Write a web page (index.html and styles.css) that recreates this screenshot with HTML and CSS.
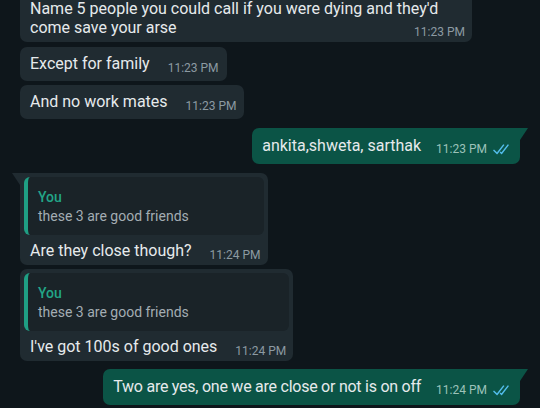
FILE: index.html
```html
<!DOCTYPE html>
<html>
<head>
<meta charset="utf-8">
<link rel="stylesheet" href="styles.css">
</head>
<body>
<div class="chat">
  <div class="row in">
    <div class="bubble multi">
      <div class="text">Name 5 people you could call if you were dying and they'd come save your arse<span class="meta">11:23 PM</span></div>
    </div>
  </div>
  <div class="row in g4">
    <div class="bubble line">
      <div class="text">Except for family</div>
      <div class="meta">11:23 PM</div>
    </div>
  </div>
  <div class="row in g4">
    <div class="bubble line">
      <div class="text">And no work mates</div>
      <div class="meta">11:23 PM</div>
    </div>
  </div>
  <div class="row out g9">
    <div class="bubble line tail">
      <div class="text">ankita,shweta, sarthak</div>
      <div class="meta">11:23 PM <svg class="check" viewBox="0 2.6 16 10" width="18" height="11"><path fill="#53bdeb" d="M15.01 3.316l-.478-.372a.365.365 0 0 0-.51.063L8.666 9.879a.32.32 0 0 1-.484.033l-.358-.325a.319.319 0 0 0-.484.032l-.378.483a.418.418 0 0 0 .036.541l1.32 1.266c.143.14.361.125.484-.033l6.272-8.048a.366.366 0 0 0-.064-.512zm-4.1 0l-.478-.372a.365.365 0 0 0-.51.063L4.566 9.879a.32.32 0 0 1-.484.033L1.891 7.769a.366.366 0 0 0-.515.006l-.423.433a.364.364 0 0 0 .006.514l3.258 3.185c.143.14.361.125.484-.033l6.272-8.048a.365.365 0 0 0-.063-.51z"/></svg></div>
    </div>
  </div>
  <div class="row in g9">
    <div class="bubble quoted tail">
      <div class="quote">
        <div class="qname">You</div>
        <div class="qtext">these 3 are good friends</div>
      </div>
      <div class="qrow">
        <div class="text">Are they close though?</div>
        <div class="meta">11:24 PM</div>
      </div>
    </div>
  </div>
  <div class="row in g4">
    <div class="bubble quoted">
      <div class="quote">
        <div class="qname">You</div>
        <div class="qtext">these 3 are good friends</div>
      </div>
      <div class="qrow">
        <div class="text">I've got 100s of good ones</div>
        <div class="meta">11:24 PM</div>
      </div>
    </div>
  </div>
  <div class="row out g8">
    <div class="bubble line tail">
      <div class="text tight">Two are yes, one we are close or not is on off</div>
      <div class="meta">11:24 PM <svg class="check" viewBox="0 2.6 16 10" width="18" height="11"><path fill="#53bdeb" d="M15.01 3.316l-.478-.372a.365.365 0 0 0-.51.063L8.666 9.879a.32.32 0 0 1-.484.033l-.358-.325a.319.319 0 0 0-.484.032l-.378.483a.418.418 0 0 0 .036.541l1.32 1.266c.143.14.361.125.484-.033l6.272-8.048a.366.366 0 0 0-.064-.512zm-4.1 0l-.478-.372a.365.365 0 0 0-.51.063L4.566 9.879a.32.32 0 0 1-.484.033L1.891 7.769a.366.366 0 0 0-.515.006l-.423.433a.364.364 0 0 0 .006.514l3.258 3.185c.143.14.361.125.484-.033l6.272-8.048a.365.365 0 0 0-.063-.51z"/></svg></div>
    </div>
  </div>
</div>
</body>
</html>
```
FILE: styles.css
```css
html, body {
  margin: 0;
  padding: 0;
}
body {
  background: #0e161b;
  font-family: Roboto, "Noto Sans", sans-serif;
  color: #e6eaec;
  width: 540px;
  height: 408px;
  overflow: hidden;
}
.chat {
  display: flex;
  flex-direction: column;
  padding: 0 20px 0 20px;
  margin-top: -7px;
}
.row {
  display: flex;
}
.row.out {
  justify-content: flex-end;
}
.row.g4 { margin-top: 4px; }
.row.g8 { margin-top: 8px; }
.row.g9 { margin-top: 9px; }
.row.in:first-child + .row { margin-top: 5px; }

.bubble {
  position: relative;
  border-radius: 7px;
}
.in .bubble { background: #202b31; }
.out .bubble { background: #0b5446; }

.in .bubble.tail { border-top-left-radius: 0; }
.out .bubble.tail { border-top-right-radius: 0; }
.bubble.tail::before {
  content: "";
  position: absolute;
  top: 0;
  width: 8px;
  height: 12px;
}
.in .bubble.tail::before {
  left: -8px;
  background: #202b31;
  clip-path: polygon(0 0, 100% 0, 100% 100%);
}
.out .bubble.tail::before {
  right: -8px;
  background: #0b5446;
  clip-path: polygon(0 0, 100% 0, 0 100%);
}

.text {
  font-size: 16px;
  line-height: 19px;
}
.text.tight { letter-spacing: -0.25px; }
.meta {
  font-size: 12px;
  line-height: 14px;
  color: #8c9aa2;
  white-space: nowrap;
  display: flex;
  align-items: center;
  gap: 5px;
  letter-spacing: 0;
}
.out .meta { color: #9cc2b9; }

.bubble.multi {
  display: flow-root;
  padding: 6px 7px 3px 10px;
  max-width: 452px;
  box-sizing: border-box;
}
.bubble.multi .meta {
  float: right;
  margin-top: 7px;
}

.bubble.line {
  display: flex;
  align-items: flex-end;
  gap: 18px;
  padding: 7px 8px 8px 10px;
}
.bubble.line .meta { margin-bottom: -2px; }
.out .bubble.line {
  padding: 8px 10px 9px 10px;
  gap: 15px;
}
.out .bubble.line .meta { margin-bottom: -1px; }
.check { display: block; }

.bubble.quoted {
  display: flex;
  flex-direction: column;
  padding: 4px 4px 5px 4px;
}
.quote {
  background: #1a2328;
  border-left: 4px solid #1f9f84;
  border-radius: 6px;
  padding: 11px 10px 9px 10px;
}
.qname {
  color: #22a587;
  font-weight: 500;
  font-size: 14px;
  line-height: 19px;
}
.qtext {
  color: #a3adb3;
  font-size: 14px;
  line-height: 19px;
}
.qrow {
  display: flex;
  align-items: flex-end;
  gap: 18px;
  padding: 6px 3px 0 6px;
}
.qrow .meta { margin-bottom: -2px; }
```
